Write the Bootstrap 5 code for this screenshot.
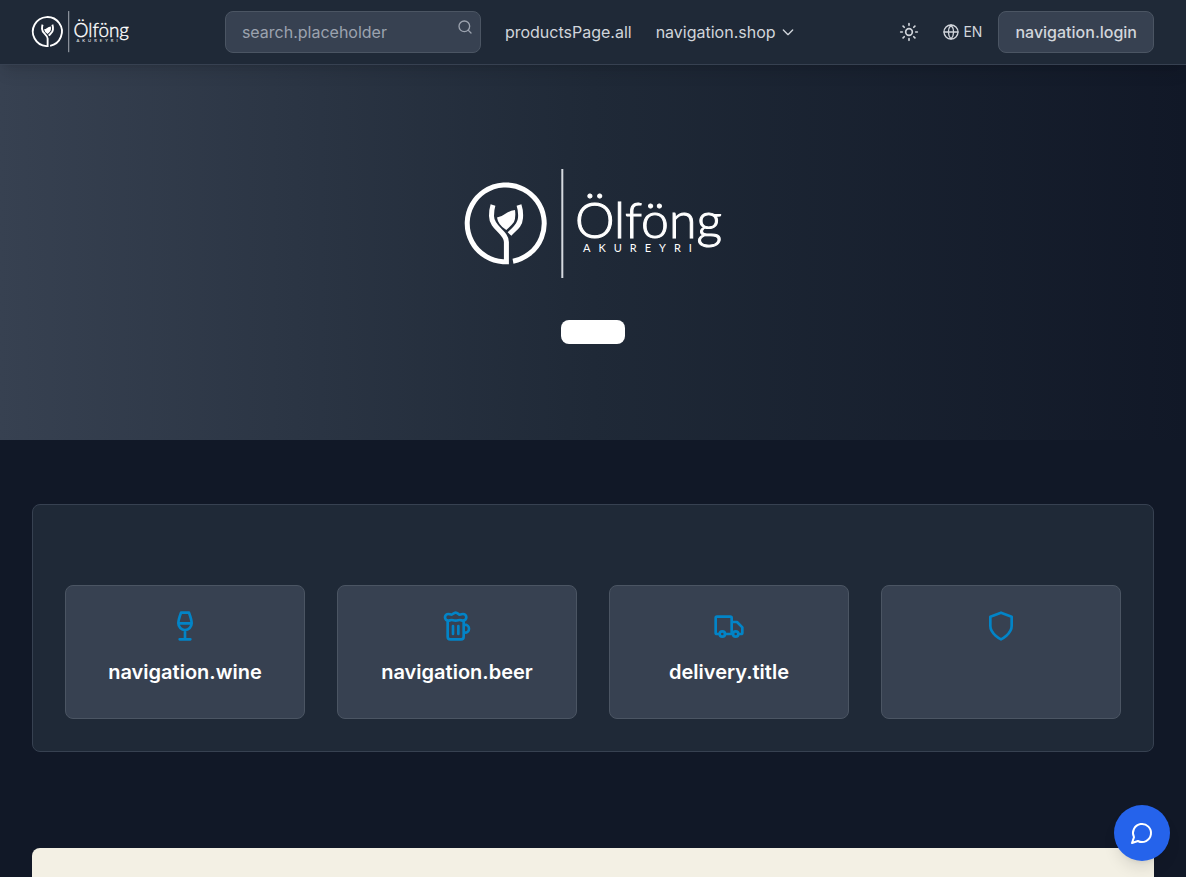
<!DOCTYPE html>
<html lang="en" data-bs-theme="dark">
<head>
<meta charset="utf-8">
<meta name="viewport" content="width=device-width, initial-scale=1">
<title>Ölföng</title>
<link rel="stylesheet" href="https://cdn.jsdelivr.net/npm/bootstrap@5.3.0/dist/css/bootstrap.min.css">
<style>
  body { font-family: Inter, "Liberation Sans", sans-serif; background: #111827; color: #fff; }
  .icon { fill: none; stroke: currentColor; stroke-width: 2; stroke-linecap: round; stroke-linejoin: round; flex: none; display: block; }
  .site-nav { background: #1f2937; border-bottom: 1px solid #374151; height: 65px; box-shadow: 0 10px 15px -3px rgba(0,0,0,.1), 0 4px 6px -4px rgba(0,0,0,.1); z-index: 1020; }
  .logo-small { width: 97px; height: 48px; display: block; overflow: visible; }
  .logo-large { width: 257px; height: 127px; display: block; overflow: visible; }
  #logo { overflow: visible; }
  .soft { color: #d1d5db; }
  .soft:hover { color: #fff; }
  .search-box { width: 256px; }
  .search-box .form-control { height: 42px; padding: 8px 40px 8px 16px; border: 1px solid #4b5563; border-radius: 8px; background: #374151; color: #fff; }
  .search-box .form-control::placeholder { color: #9ca3af; }
  .search-icon { right: 8px; top: 8px; color: #9ca3af; }
  .bare { border: 0; background: none; padding: 0; }
  .btn-login { height: 42px; padding: 0 16px; border: 1px solid #4b5563; border-radius: 8px; background: #374151; color: #d1d5db; font-weight: 500; }
  .lang { font-size: 14px; line-height: 20px; }
  .hero { background: linear-gradient(to right, #374151, #1f2937, #111827); padding: 96px 16px; gap: 32px; }
  .hero-cta { width: 64px; height: 24px; border-radius: 8px; background: #fff; }
  .page-pad { padding-left: 32px; padding-right: 32px; }
  .features { margin-top: 64px; background: #1f2937; border: 1px solid #374151; border-radius: 8px; padding: 80px 32px 32px; }
  .feature-grid { display: grid; grid-template-columns: repeat(4, 1fr); gap: 32px; }
  .feature { background: #374151; border: 1px solid #4b5563; border-radius: 8px; padding: 24px 24px 32px; }
  .feature .icon { color: #0284c7; margin-bottom: 16px; }
  .feature h3 { font-size: 20px; line-height: 28px; min-height: 28px; font-weight: 600; margin: 0; }
  .cream { margin-top: 96px; background: #f3f0e4; border-radius: 8px; padding: 96px 32px; }
  .chat { width: 56px; height: 56px; right: 16px; bottom: 16px; background: #2563eb; color: #fff; box-shadow: 0 10px 15px -3px rgba(0,0,0,.1), 0 4px 6px -4px rgba(0,0,0,.1); z-index: 1030; }
  @media (max-width: 991px) { .feature-grid { grid-template-columns: repeat(2, 1fr); } .nav-main { display: none !important; } }
</style>
</head>
<body>
<svg width="0" height="0" class="position-absolute" aria-hidden="true">
  <symbol id="logo" viewBox="0 -7 257 127">
    <g fill="none" stroke="#fff" stroke-width="5">
      <path d="M48 93.2A38.5 38.5 0 1 0 38 93.8H41.4V74C41.4 64 26.5 60 26.5 48C26.5 43 27 40 28 37"/>
      <path d="M54 37C55 40 56 44 55.5 50C55 58 49 61 44.5 66"/>
    </g>
    <path d="M32 49.5Q36 49 40 46Q44 43 50 42Q51 49 49 54Q46 58 41.3 62Q33 57 32 49.5Z" fill="#fff"/>
    <path d="M97.3 1V110" stroke="#d5d9df" stroke-width="2"/>
    <text x="110" y="70" font-family="Lato, sans-serif" font-weight="300" font-size="50" fill="#fff" stroke="#fff" stroke-width="1">Ölföng</text>
    <text x="118" y="84" font-family="Lato, sans-serif" font-size="11" letter-spacing="8" fill="#fff">AKUREYRI</text>
  </symbol>
</svg>

<header class="site-nav sticky-top page-pad d-flex align-items-center justify-content-between">
  <a href="#" aria-label="Ölföng Akureyri"><svg class="logo-small"><use href="#logo"/></svg></a>
  <nav class="nav-main d-flex align-items-center gap-4">
    <form class="search-box position-relative" role="search">
      <input class="form-control" type="search" placeholder="search.placeholder" aria-label="search.placeholder">
      <button type="button" class="bare search-icon position-absolute" aria-label="Search"><svg class="icon" width="16" height="16" viewBox="0 0 24 24"><circle cx="11" cy="11" r="8"/><path d="m21 21-4.3-4.3"/></svg></button>
    </form>
    <a href="#" class="soft text-decoration-none">productsPage.all</a>
    <button type="button" class="bare soft d-flex align-items-center gap-1">navigation.shop <svg class="icon" width="16" height="16" viewBox="0 0 24 24"><path d="m5 9 7 7 7-7"/></svg></button>
  </nav>
  <div class="d-flex align-items-center gap-3">
    <button type="button" class="bare soft p-2" aria-label="Theme"><svg class="icon" width="20" height="20" viewBox="0 0 24 24"><circle cx="12" cy="12" r="4"/><path d="M12 2v2M12 20v2M4.9 4.9l1.4 1.4M17.7 17.7l1.4 1.4M2 12h2M20 12h2M6.3 17.7l-1.4 1.4M19.1 4.9l-1.4 1.4"/></svg></button>
    <button type="button" class="bare soft lang d-flex align-items-center gap-1"><svg class="icon" width="16" height="16" viewBox="0 0 24 24"><circle cx="12" cy="12" r="10.5"/><path d="M12 1.5a16 16 0 0 0 0 21 16 16 0 0 0 0-21M1.5 12h21"/></svg>EN</button>
    <button type="button" class="btn-login">navigation.login</button>
  </div>
</header>

<main>
  <section class="hero d-flex flex-column align-items-center">
    <svg class="logo-large" role="img" aria-label="Ölföng Akureyri"><use href="#logo"/></svg>
    <a href="#" class="hero-cta" aria-label="Shop"></a>
  </section>
  <div class="page-pad">
    <section class="features">
      <div class="feature-grid">
        <div class="feature d-flex flex-column align-items-center text-center">
          <svg class="icon" width="32" height="32" viewBox="0 0 24 24"><path d="M8 22h8M12 15v7M7 10h10M12 15a5 5 0 0 0 5-5c0-2-.5-4-2-8H9c-1.5 4-2 6-2 8a5 5 0 0 0 5 5Z"/></svg>
          <h3>navigation.wine</h3>
        </div>
        <div class="feature d-flex flex-column align-items-center text-center">
          <svg class="icon" width="32" height="32" viewBox="0 0 24 24"><path d="M17 11h1a3 3 0 0 1 0 6h-1M9 12v6M13 12v6M14 7.5c-1 0-1.44.5-3 .5s-2-.5-3-.5-1.72.5-2.5.5a2.5 2.5 0 0 1 0-5c.78 0 1.57.5 2.5.5S9.44 2 11 2s2 1.5 3 1.5 1.72-.5 2.5-.5a2.5 2.5 0 0 1 0 5c-.78 0-1.5-.5-2.5-.5ZM5 8v12a2 2 0 0 0 2 2h8a2 2 0 0 0 2-2V8"/></svg>
          <h3>navigation.beer</h3>
        </div>
        <div class="feature d-flex flex-column align-items-center text-center">
          <svg class="icon" width="32" height="32" viewBox="0 0 24 24"><path d="M5 18H3a1 1 0 0 1-1-1V6a1 1 0 0 1 1-1h10a1 1 0 0 1 1 1v12M9 18h6M14 9h4l4 4v4a1 1 0 0 1-1 1h-2"/><circle cx="7" cy="18" r="2"/><circle cx="17" cy="18" r="2"/></svg>
          <h3>delivery.title</h3>
        </div>
        <div class="feature d-flex flex-column align-items-center text-center">
          <svg class="icon" width="32" height="32" viewBox="0 0 24 24"><path d="M12 22s8-4 8-10V5l-8-3-8 3v7c0 6 8 10 8 10Z"/></svg>
          <h3></h3>
        </div>
      </div>
    </section>
    <section class="cream"></section>
  </div>
</main>

<button type="button" class="chat bare rounded-circle position-fixed d-flex align-items-center justify-content-center" aria-label="Chat"><svg class="icon" width="24" height="24" viewBox="0 0 24 24"><path d="M7.9 20A9 9 0 1 0 4 16.1L2 22Z"/></svg></button>
<script src="https://cdn.jsdelivr.net/npm/bootstrap@5.3.0/dist/js/bootstrap.bundle.min.js"></script>
</body>
</html>
